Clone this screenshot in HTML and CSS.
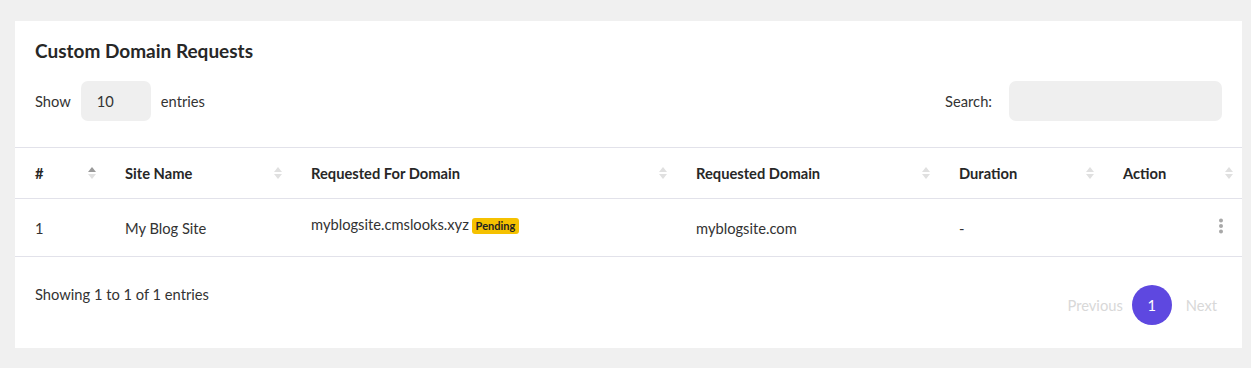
FILE: index.html
```html
<!DOCTYPE html>
<html lang="en">
<head>
    <meta charset="UTF-8">
    <meta name="viewport" content="width=device-width, initial-scale=1.0">
    <title>Custom Domain Requests</title>
    <link rel="stylesheet" href="styles.css">
</head>
<body>
    <div class="card">
        <h2 class="card-title">Custom Domain Requests</h2>
        <div class="table-tools">
            <label class="length">Show <span class="select-box">10</span> entries</label>
            <label class="search">Search: <input type="text" class="search-input"></label>
        </div>
        <table class="data-table">
            <colgroup>
                <col style="width:90px">
                <col style="width:186px">
                <col style="width:385px">
                <col style="width:263px">
                <col style="width:164px">
                <col style="width:139px">
            </colgroup>
            <thead>
                <tr>
                    <th><div class="th-inner">#<span class="sort asc"><i class="up"></i><i class="down"></i></span></div></th>
                    <th><div class="th-inner">Site Name<span class="sort"><i class="up"></i><i class="down"></i></span></div></th>
                    <th><div class="th-inner">Requested For Domain<span class="sort"><i class="up"></i><i class="down"></i></span></div></th>
                    <th><div class="th-inner">Requested Domain<span class="sort"><i class="up"></i><i class="down"></i></span></div></th>
                    <th><div class="th-inner">Duration<span class="sort"><i class="up"></i><i class="down"></i></span></div></th>
                    <th><div class="th-inner">Action<span class="sort"><i class="up"></i><i class="down"></i></span></div></th>
                </tr>
            </thead>
            <tbody>
                <tr>
                    <td>1</td>
                    <td>My Blog Site</td>
                    <td class="domain-cell">myblogsite.cmslooks.xyz <span class="badge-pending">Pending</span></td>
                    <td>myblogsite.com</td>
                    <td>-</td>
                    <td class="action-cell">
                        <svg width="6" height="16" viewBox="0 0 6 16"><circle cx="3" cy="2.5" r="2" fill="#a8a8a8"/><circle cx="3" cy="8" r="2" fill="#a8a8a8"/><circle cx="3" cy="13.5" r="2" fill="#a8a8a8"/></svg>
                    </td>
                </tr>
            </tbody>
        </table>
        <div class="table-footer">
            <div class="info">Showing 1 to 1 of 1 entries</div>
            <div class="pagination">
                <span class="page-link prev disabled">Previous</span>
                <span class="page-current">1</span>
                <span class="page-link next disabled">Next</span>
            </div>
        </div>
    </div>
</body>
</html>
```
FILE: styles.css
```css
body {
    font-family: Lato, "Open Sans", sans-serif;
    background-color: #f0f0f0;
    margin: 0;
    padding: 21px 9px 20px 15px;
    color: #333;
    font-size: 14.7px;
}
.card {
    background-color: #fff;
    width: 1227px;
    padding-top: 18px;
    padding-bottom: 23px;
}
.card-title {
    margin: 0 20px;
    font-size: 19px;
    line-height: 24px;
    font-weight: bold;
    color: #272727;
}
.table-tools {
    display: flex;
    justify-content: space-between;
    align-items: center;
    margin: 18px 20px 26px;
}
.length,
.search {
    display: flex;
    align-items: center;
    color: #333;
}
.select-box {
    display: inline-block;
    width: 70px;
    height: 40px;
    line-height: 40px;
    padding-left: 16px;
    box-sizing: border-box;
    background-color: #efefef;
    border-radius: 7px;
    margin: 0 10px;
}
.search-input {
    width: 213px;
    height: 40px;
    box-sizing: border-box;
    margin-left: 17px;
    border: none;
    border-radius: 7px;
    background-color: #efefef;
}
.data-table {
    width: 1227px;
    border-collapse: collapse;
    table-layout: fixed;
}
.data-table th {
    height: 50px;
    padding: 0 9px 0 20px;
    text-align: left;
    font-weight: bold;
    color: #272727;
    border-top: 1px solid #e2e2ea;
    border-bottom: 1px solid #e2e2ea;
}
.th-inner {
    display: flex;
    justify-content: space-between;
    align-items: center;
}
.sort {
    display: flex;
    flex-direction: column;
    gap: 2px;
}
.sort i {
    display: block;
    width: 0;
    height: 0;
    border-left: 4px solid transparent;
    border-right: 4px solid transparent;
}
.sort .up {
    border-bottom: 5px solid #e0e0e0;
}
.sort .down {
    border-top: 5px solid #e0e0e0;
}
.sort.asc .up {
    border-bottom-color: #9a9a9a;
}
.data-table td {
    height: 57px;
    padding: 0 20px;
    border-bottom: 1px solid #e2e2ea;
    color: #333;
}
.data-table td.domain-cell {
    height: 50px;
    padding-bottom: 7px;
}
.badge-pending {
    display: inline-block;
    background-color: #f5c100;
    color: #222;
    font-size: 11px;
    font-weight: bold;
    line-height: 16px;
    padding: 0 4px;
    border-radius: 3px;
    margin-left: -1px;
}
.data-table td.action-cell {
    text-align: right;
    padding-right: 18px;
}
.table-footer {
    display: flex;
    justify-content: space-between;
    align-items: flex-start;
    padding: 28px 25px 0 20px;
}
.info {
    line-height: 20px;
    margin-top: -1px;
}
.pagination {
    display: flex;
    align-items: center;
}
.page-link.disabled {
    color: #d8d8d8;
}
.page-link.prev {
    margin-right: 9px;
}
.page-link.next {
    margin-left: 14px;
}
.page-current {
    width: 40px;
    height: 40px;
    line-height: 40px;
    border-radius: 50%;
    text-align: center;
    background-color: #5e48e0;
    color: #fff;
}
```
